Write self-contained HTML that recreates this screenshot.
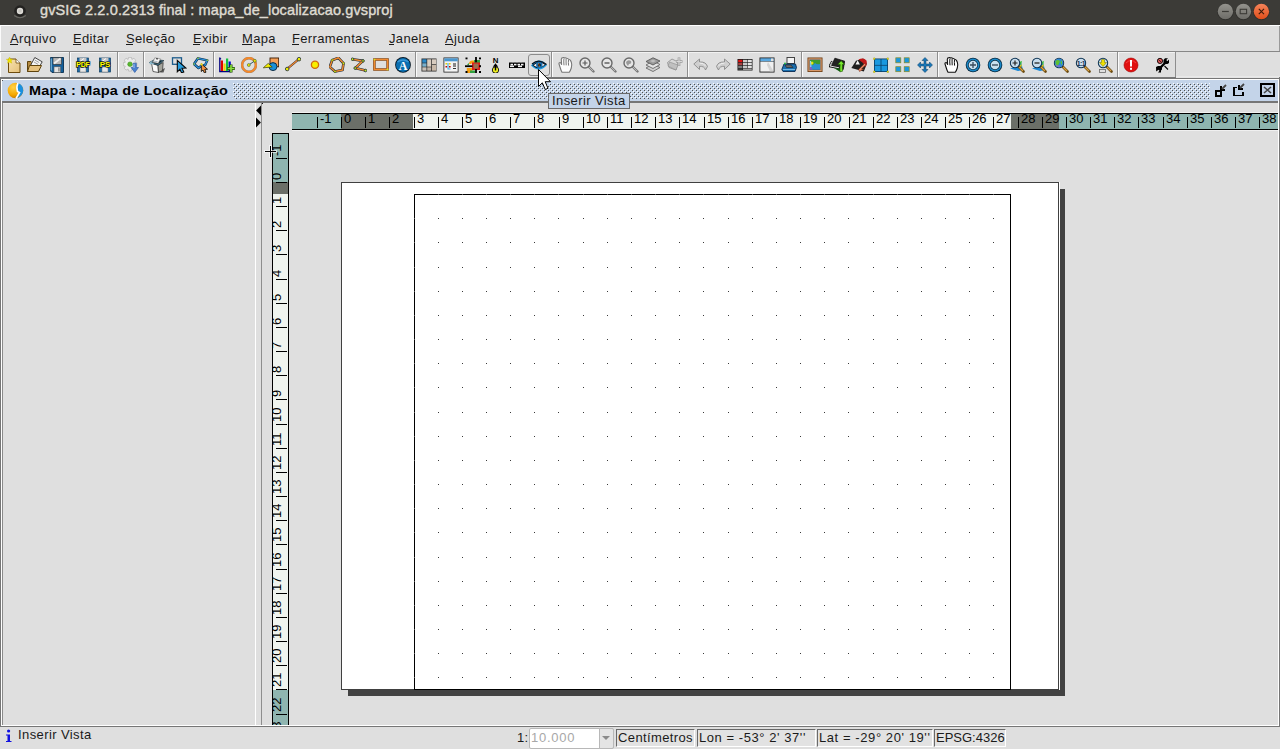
<!DOCTYPE html>
<html><head><meta charset="utf-8"><title>gvSIG</title>
<style>
html,body{margin:0;padding:0;width:1280px;height:749px;overflow:hidden;background:#dfdfdf;position:relative}
</style></head><body>
<div style="position:absolute;left:0px;top:0px;width:1280px;height:25px;background:#3c3b37;"></div><div style="position:absolute;left:0px;top:25px;width:1280px;height:1px;background:#ffffff;"></div><svg style="position:absolute;left:12px;top:3px" width="16" height="16"><path d="M2.2 12.5 Q8 17 13.8 12.5" stroke="#6a6964" stroke-width="1.2" fill="none"/><circle cx="8" cy="8" r="5.8" fill="#232220"/><circle cx="8" cy="8" r="3.2" fill="#dddbd6"/><circle cx="8" cy="8" r="1.8" fill="#c8c6c0"/></svg><div style="position:absolute;left:40px;top:3px;font-family:'Liberation Sans', sans-serif;font-size:14.5px;font-weight:400;color:#dfdbd2;white-space:pre;line-height:1;letter-spacing:0.12px;-webkit-text-stroke:0.4px #dfdbd2">gvSIG 2.2.0.2313 final : mapa_de_localizacao.gvsproj</div><svg style="position:absolute;left:1215px;top:1px" width="21" height="21"><circle cx="10.4" cy="11" r="8.2" fill="#2e2d2a"/><defs><linearGradient id="g1225" x1="0" y1="0" x2="0" y2="1"><stop offset="0" stop-color="#94938d"/><stop offset="1" stop-color="#6e6d68"/></linearGradient></defs><g transform="translate(0.4,0.5)"><circle cx="10" cy="10" r="7.7" fill="url(#g1225)"/><rect x="6.6" y="9.4" width="6.8" height="1.2" fill="#3c3b37"/></g></svg><svg style="position:absolute;left:1233px;top:1px" width="21" height="21"><circle cx="10.4" cy="11" r="8.2" fill="#2e2d2a"/><defs><linearGradient id="g1243" x1="0" y1="0" x2="0" y2="1"><stop offset="0" stop-color="#94938d"/><stop offset="1" stop-color="#6e6d68"/></linearGradient></defs><g transform="translate(0.4,0.5)"><circle cx="10" cy="10" r="7.7" fill="url(#g1243)"/><rect x="6.8" y="7.8" width="6.4" height="4.4" fill="none" stroke="#3c3b37" stroke-width="1.1"/></g></svg><svg style="position:absolute;left:1251px;top:1px" width="21" height="21"><circle cx="10.4" cy="11" r="8.2" fill="#2e2d2a"/><defs><linearGradient id="g1261" x1="0" y1="0" x2="0" y2="1"><stop offset="0" stop-color="#f5845a"/><stop offset="1" stop-color="#e04e1a"/></linearGradient></defs><g transform="translate(0.4,0.5)"><circle cx="10" cy="10" r="7.7" fill="url(#g1261)"/><path d="M7.4 7.4 L12.6 12.6 M12.6 7.4 L7.4 12.6" stroke="#3a1a0a" stroke-width="1.1"/></g></svg><div style="position:absolute;left:0px;top:26px;width:1280px;height:25px;background:#dfdfdf;"></div><div style="position:absolute;left:0px;top:26px;width:1px;height:25px;background:#fbfbfb;"></div><div style="position:absolute;left:0px;top:51px;width:1280px;height:1px;background:#878787;"></div><div style="position:absolute;left:10px;top:32px;font-family:'Liberation Sans', sans-serif;font-size:13px;font-weight:400;color:#1a1a1a;white-space:pre;line-height:1;letter-spacing:0.35px">Arquivo</div><div style="position:absolute;left:73px;top:32px;font-family:'Liberation Sans', sans-serif;font-size:13px;font-weight:400;color:#1a1a1a;white-space:pre;line-height:1;letter-spacing:0.35px">Editar</div><div style="position:absolute;left:126px;top:32px;font-family:'Liberation Sans', sans-serif;font-size:13px;font-weight:400;color:#1a1a1a;white-space:pre;line-height:1;letter-spacing:0.35px">Seleção</div><div style="position:absolute;left:193px;top:32px;font-family:'Liberation Sans', sans-serif;font-size:13px;font-weight:400;color:#1a1a1a;white-space:pre;line-height:1;letter-spacing:0.35px">Exibir</div><div style="position:absolute;left:242px;top:32px;font-family:'Liberation Sans', sans-serif;font-size:13px;font-weight:400;color:#1a1a1a;white-space:pre;line-height:1;letter-spacing:0.35px">Mapa</div><div style="position:absolute;left:292px;top:32px;font-family:'Liberation Sans', sans-serif;font-size:13px;font-weight:400;color:#1a1a1a;white-space:pre;line-height:1;letter-spacing:0.35px">Ferramentas</div><div style="position:absolute;left:389px;top:32px;font-family:'Liberation Sans', sans-serif;font-size:13px;font-weight:400;color:#1a1a1a;white-space:pre;line-height:1;letter-spacing:0.35px">Janela</div><div style="position:absolute;left:445px;top:32px;font-family:'Liberation Sans', sans-serif;font-size:13px;font-weight:400;color:#1a1a1a;white-space:pre;line-height:1;letter-spacing:0.35px">Ajuda</div><div style="position:absolute;left:10px;top:44px;width:8px;height:1px;background:#1a1a1a;"></div><div style="position:absolute;left:73px;top:44px;width:8px;height:1px;background:#1a1a1a;"></div><div style="position:absolute;left:126px;top:44px;width:7px;height:1px;background:#1a1a1a;"></div><div style="position:absolute;left:193px;top:44px;width:7px;height:1px;background:#1a1a1a;"></div><div style="position:absolute;left:242px;top:44px;width:10px;height:1px;background:#1a1a1a;"></div><div style="position:absolute;left:292px;top:44px;width:7px;height:1px;background:#1a1a1a;"></div><div style="position:absolute;left:389px;top:44px;width:5px;height:1px;background:#1a1a1a;"></div><div style="position:absolute;left:445px;top:44px;width:8px;height:1px;background:#1a1a1a;"></div><div style="position:absolute;left:0px;top:52px;width:1280px;height:25px;background:#dfdfdf;"></div><div style="position:absolute;left:0px;top:52px;width:1176px;height:1px;background:#f2f2f2;"></div><div style="position:absolute;left:528px;top:54px;width:20px;height:20px;border:1px solid #8c8c8c;border-radius:3px"></div><svg style="position:absolute;left:5px;top:57px" width="16" height="16" viewBox="0 0 16 16"><defs><linearGradient id="gnew" x1="0" y1="0" x2="1" y2="1"><stop offset="0" stop-color="#f8e2b0"/><stop offset="1" stop-color="#e4c07a"/></linearGradient></defs>
<path d="M3.5 2 H11 L15 6 V15.5 H3.5 Z" fill="url(#gnew)" stroke="#6e4c0e" stroke-width="1"/>
<path d="M11 2 V6 H15" fill="#fff" stroke="#6e4c0e" stroke-width="0.8"/>
<path d="M4.6 0 L5.5 2.2 L7.9 2.3 L6.1 3.8 L6.8 6.2 L4.6 4.9 L2.5 6.2 L3.1 3.8 L1.3 2.3 L3.7 2.2Z" fill="#f0e400" stroke="#c8b800" stroke-width="0.4"/></svg><svg style="position:absolute;left:27px;top:57px" width="16" height="16" viewBox="0 0 16 16"><path d="M0.5 4.5 H4 L5 5.5 H11 V14.5 H0.5Z" fill="#b58a40" stroke="#5f430c"/>
<path d="M7.8 0.5 L15.2 4.8 L11 12 L3.8 7.8Z" fill="#f4f4f4" stroke="#333" stroke-width="0.9"/>
<path d="M8 3.2 L12.2 5.6 M7 5 L11.2 7.4" stroke="#999" stroke-width="0.9"/>
<path d="M2.5 8.5 H14.5 L11.5 14.5 H0.5Z" fill="#e6c27e" stroke="#5f430c"/></svg><svg style="position:absolute;left:49px;top:57px" width="16" height="16" viewBox="0 0 16 16"><path d="M1.5 0.5 H14.5 V15.5 H3 L1.5 14Z" fill="#145f9a" stroke="#0a3050" stroke-width="0.9"/>
<path d="M2.2 1.5 V13.5" stroke="#78b8e0" stroke-width="1.2"/>
<rect x="4" y="0.8" width="8.5" height="6.5" fill="#b8b8b8" stroke="#333" stroke-width="0.6"/>
<path d="M5 6.5 L11.5 1.5" stroke="#f0f0f0" stroke-width="1.6"/>
<rect x="5" y="9.8" width="6.5" height="5.7" fill="#e4e4e4" stroke="#555" stroke-width="0.6"/>
<rect x="9" y="10.5" width="1.8" height="4" fill="#999"/></svg><svg style="position:absolute;left:75px;top:57px" width="16" height="16" viewBox="0 0 16 16"><rect x="2.5" y="1" width="11" height="14" fill="#1a6aa8" stroke="#0b3a60" stroke-width="0.7"/>
<rect x="4.5" y="1" width="7" height="4.5" fill="#c4c4c4"/>
<path d="M5 4.5 L9 1.5" stroke="#fff" stroke-width="1"/>
<rect x="5" y="10" width="6" height="5" fill="#e8e8e8" stroke="#777" stroke-width="0.5"/><text x="8" y="10.2" font-family="Liberation Sans" font-weight="700" font-size="7" fill="#ffff00" text-anchor="middle" stroke="#111" stroke-width="1.4" paint-order="stroke" letter-spacing="-0.2">PDF</text></svg><svg style="position:absolute;left:97px;top:57px" width="16" height="16" viewBox="0 0 16 16"><rect x="2.5" y="1" width="11" height="14" fill="#1a6aa8" stroke="#0b3a60" stroke-width="0.7"/>
<rect x="4.5" y="1" width="7" height="4.5" fill="#c4c4c4"/>
<path d="M5 4.5 L9 1.5" stroke="#fff" stroke-width="1"/>
<rect x="5" y="10" width="6" height="5" fill="#e8e8e8" stroke="#777" stroke-width="0.5"/><text x="8" y="10.4" font-family="Liberation Sans" font-weight="700" font-size="8" fill="#ffff00" text-anchor="middle" stroke="#111" stroke-width="1.4" paint-order="stroke">PS</text></svg><svg style="position:absolute;left:123px;top:57px" width="16" height="16" viewBox="0 0 16 16"><g fill="#ececec" stroke="#b8b8b8" stroke-width="0.8">
<path d="M5.6 0.3 H8.4 L8.9 2.4 L10.9 1.3 L12.8 3.2 L11.7 5.2 L13.8 5.8 V8.6 L11.7 9.2 L12.8 11.2 L10.9 13.1 L8.9 12 L8.4 14.1 H5.6 L5.1 12 L3.1 13.1 L1.2 11.2 L2.3 9.2 L0.2 8.6 V5.8 L2.3 5.2 L1.2 3.2 L3.1 1.3 L5.1 2.4Z"/></g>
<circle cx="7" cy="7.2" r="2.3" fill="#58b830" stroke="#3a8a1a" stroke-width="0.5"/>
<path d="M10.2 6.2 H13.3 V10.5 H15.5 L11.75 15.5 L8 10.5 H10.2Z" fill="#4a80d0" stroke="#2a58a0" stroke-width="0.6"/>
<path d="M11 7 V11" stroke="#a8c8f0" stroke-width="0.9"/></svg><svg style="position:absolute;left:149px;top:57px" width="16" height="16" viewBox="0 0 16 16"><path d="M13 12.5 L16 11 L14.5 15.5 L11 15.5Z" fill="#3a3a3a" opacity="0.8"/>
<path d="M2.5 6 L9 8.2 L9.5 15.5 L4 14.5Z" fill="#fbfbfb" stroke="#2a2a2a" stroke-width="0.7"/>
<path d="M9 8.2 L14.2 5.5 L13.5 13.5 L9.5 15.5Z" fill="#a4a49c" stroke="#2a2a2a" stroke-width="0.7"/>
<path d="M0.3 5.5 L6 2.3 L15 3.6 L9 8.5Z" fill="#3a6a80" stroke="#1a2a30" stroke-width="0.6"/>
<path d="M0.3 5.5 L3.5 3.8 L5 6.8 L1 7.5Z" fill="#8ab8cc"/>
<path d="M2.3 5.3 L6.3 3.2 L13 4.2 L8.6 7Z" fill="#1a2a30"/>
<path d="M3.8 5.2 L5.8 0.8 L11.5 1.8 L9.3 6.3Z" fill="#f6f6f6" stroke="#666" stroke-width="0.5"/>
<path d="M7 1 L9 1.5 L8 3Z" fill="#111"/>
<path d="M5 4.2 L8.5 4.6" stroke="#9ab" stroke-width="0.8"/></svg><svg style="position:absolute;left:171px;top:57px" width="16" height="16" viewBox="0 0 16 16"><rect x="1.5" y="0.8" width="9" height="6.5" fill="none" stroke="#1b5b8b" stroke-width="1.3"/>
<path d="M6.3 3.3 L14.8 11 L11 11.3 L12.8 15 L10.6 15.9 L8.9 12.3 L6.3 14.8Z" fill="#2aa0e0" stroke="#0a0a0a" stroke-width="1.1"/></svg><svg style="position:absolute;left:193px;top:57px" width="16" height="16" viewBox="0 0 16 16"><path d="M1 7 L5 1.3 L14.3 3.3 L12.2 8 L8.5 8.6 L5.5 11Z" fill="none" stroke="#0a2a4a" stroke-width="2.4" stroke-linejoin="round"/>
<path d="M1 7 L5 1.3 L14.3 3.3 L12.2 8 L8.5 8.6 L5.5 11Z" fill="none" stroke="#2a90d8" stroke-width="1.3" stroke-linejoin="round"/>
<g fill="#a0d020"><circle cx="5" cy="1.3" r="0.8"/><circle cx="14.3" cy="3.3" r="0.8"/><circle cx="1" cy="7" r="0.8"/></g>
<path d="M8.3 6.8 L14.5 12.2 L11.8 12.4 L13 15.2 L11.3 15.8 L10 13 L8.3 14.5Z" fill="#f09040" stroke="#111" stroke-width="0.9"/>
<circle cx="8.6" cy="7.4" r="1.2" fill="#f0e020"/></svg><svg style="position:absolute;left:219px;top:57px" width="16" height="16" viewBox="0 0 16 16"><path d="M0.8 0.5 V14.5 H12" fill="none" stroke="#000080" stroke-width="1.3"/>
<path d="M0.8 0.5 L2.5 2 L0.8 2.5Z" fill="#000080"/>
<rect x="1.8" y="3.5" width="2.2" height="10.5" fill="#e00000"/>
<rect x="4.4" y="6.5" width="2.2" height="7.5" fill="#f5d000"/>
<rect x="7" y="1.5" width="2.2" height="12.5" fill="#10c040"/>
<rect x="9.6" y="4.5" width="2.2" height="9.5" fill="#0000d0"/>
<path d="M12 7.5 V15.5 M8.3 11.5 H15.8" stroke="#1a4a00" stroke-width="3"/>
<path d="M12 8 V15 M8.8 11.5 H15.3" stroke="#8ce040" stroke-width="1.6"/></svg><svg style="position:absolute;left:241px;top:57px" width="16" height="16" viewBox="0 0 16 16"><circle cx="8" cy="8" r="6.9" fill="none" stroke="#5a2a00" stroke-width="2.6" opacity="0.5"/>
<circle cx="8" cy="8" r="6.9" fill="none" stroke="#f5892a" stroke-width="2"/>
<path d="M7.8 8 L13.8 3.8" stroke="#1a4a5a" stroke-width="0.9"/>
<circle cx="7.8" cy="8" r="1.5" fill="#e6e600" stroke="#2a4a2a" stroke-width="0.5"/>
<circle cx="13.8" cy="3.8" r="1.5" fill="#e6e600" stroke="#2a4a2a" stroke-width="0.5"/></svg><svg style="position:absolute;left:263px;top:57px" width="16" height="16" viewBox="0 0 16 16"><rect x="7" y="1" width="8.7" height="8.8" fill="#f5a05a" stroke="#3a1a00" stroke-width="0.9"/>
<circle cx="10" cy="9.6" r="4" fill="#1a90d8" stroke="#06223a" stroke-width="0.9"/>
<path d="M9.2 10 L0.3 10.8 L5.2 6.4Z" fill="#f5f000" stroke="#3a3a00" stroke-width="0.7"/></svg><svg style="position:absolute;left:285px;top:57px" width="16" height="16" viewBox="0 0 16 16"><path d="M2 12 L14 2" stroke="#1a1a2a" stroke-width="2.2"/>
<path d="M2 12 L14 2" stroke="#f08a30" stroke-width="1.4"/>
<circle cx="2.2" cy="12" r="1.8" fill="#f0f000" stroke="#1a2a3a" stroke-width="0.8"/>
<circle cx="14" cy="2.2" r="1.8" fill="#f0f000" stroke="#1a2a3a" stroke-width="0.8"/></svg><svg style="position:absolute;left:307px;top:57px" width="16" height="16" viewBox="0 0 16 16"><circle cx="8" cy="7.8" r="3.6" fill="#f8f000" stroke="#d06a10" stroke-width="1.3"/></svg><svg style="position:absolute;left:329px;top:57px" width="16" height="16" viewBox="0 0 16 16"><path d="M3.2 3.2 L9.4 0.8 L14.5 6.3 L13.5 13 L6 14.5 L0.8 10Z" fill="none" stroke="#1a2a3a" stroke-width="2.6" stroke-linejoin="round"/>
<path d="M3.2 3.2 L9.4 0.8 L14.5 6.3 L13.5 13 L6 14.5 L0.8 10Z" fill="none" stroke="#f08a30" stroke-width="1.5" stroke-linejoin="round"/>
<g fill="#d0f020" stroke="#2a3a1a" stroke-width="0.4"><circle cx="3.2" cy="3.2" r="1.1"/><circle cx="14.5" cy="6.3" r="1.1"/><circle cx="6" cy="14.5" r="1.1"/></g></svg><svg style="position:absolute;left:351px;top:57px" width="16" height="16" viewBox="0 0 16 16"><path d="M1.5 2.2 L12 3.9 L4.2 11.1 L14.5 13.5" fill="none" stroke="#1a2a3a" stroke-width="2.6" stroke-linejoin="round"/>
<path d="M1.5 2.2 L12 3.9 L4.2 11.1 L14.5 13.5" fill="none" stroke="#f08a30" stroke-width="1.5" stroke-linejoin="round"/>
<g fill="#c8f020" stroke="#1a2a3a" stroke-width="0.8"><circle cx="1.5" cy="2.2" r="1.3"/><circle cx="12" cy="3.9" r="1.3"/><circle cx="4.2" cy="11.1" r="1.3"/><circle cx="14.5" cy="13.5" r="1.3"/></g></svg><svg style="position:absolute;left:373px;top:57px" width="16" height="16" viewBox="0 0 16 16"><rect x="1.4" y="2.5" width="13.2" height="10" fill="none" stroke="#5a3010" stroke-width="2.4"/>
<rect x="1.4" y="2.5" width="13.2" height="10" fill="none" stroke="#f08a30" stroke-width="1.6"/>
<circle cx="1.5" cy="2.6" r="0.9" fill="#c8f020"/><circle cx="14.5" cy="12.4" r="0.9" fill="#c8f020"/></svg><svg style="position:absolute;left:395px;top:57px" width="16" height="16" viewBox="0 0 16 16"><circle cx="8" cy="7.9" r="7.9" fill="#081a28"/>
<circle cx="8" cy="7.9" r="7" fill="#0a6eb0"/>
<path d="M2.5 5 Q8 1 13.5 5" stroke="#3a98d8" stroke-width="1.5" fill="none"/>
<text x="8" y="12.6" font-family="Liberation Serif" font-weight="700" font-size="12" fill="#fff" text-anchor="middle">A</text></svg><svg style="position:absolute;left:421px;top:57px" width="16" height="16" viewBox="0 0 16 16"><rect x="0.5" y="1.5" width="15" height="13" fill="#2a2a2a"/>
<rect x="1.3" y="2.3" width="4.2" height="3.4" fill="#2a88c8"/><rect x="1.3" y="6.3" width="4.2" height="3.4" fill="#7ab0cc"/><rect x="1.3" y="10.3" width="4.2" height="3.4" fill="#c8c0b8"/>
<rect x="6.2" y="2.3" width="4" height="7.4" fill="#d8ccc0"/><rect x="6.2" y="10.3" width="4" height="3.4" fill="#c0b4a8"/>
<rect x="10.9" y="2.3" width="4.3" height="5" fill="#d8ccc0"/><rect x="10.9" y="8" width="4.3" height="5.7" fill="#c8b8a8"/></svg><svg style="position:absolute;left:443px;top:57px" width="16" height="16" viewBox="0 0 16 16"><rect x="0.5" y="0.5" width="15" height="15" fill="#222"/>
<rect x="1.3" y="1.3" width="13.4" height="13.4" fill="#f4f4f4"/>
<rect x="1.3" y="1.3" width="13.4" height="3" fill="#4a98d0"/>
<rect x="2.5" y="6" width="1.6" height="1.5" fill="#e8d000"/><rect x="6" y="6" width="1.6" height="1.5" fill="#e8d000"/>
<rect x="2.5" y="9" width="1.6" height="1.5" fill="#c00000"/><rect x="6" y="9" width="1.6" height="1.5" fill="#c00000"/>
<path d="M5 6 V12 H7.5" stroke="#40a8e0" stroke-width="1.1" fill="none"/>
<rect x="10" y="6" width="3" height="4" fill="#888"/><rect x="10" y="11" width="3" height="1" fill="#333"/></svg><svg style="position:absolute;left:465px;top:57px" width="16" height="16" viewBox="0 0 16 16"><path d="M4 7 Q4 3.5 7.5 3.5 H10 V6 H7 Q6.5 6 6.5 7Z" fill="#f5a010"/>
<rect x="1.8" y="11" width="5.5" height="5" fill="#f5a010"/>
<rect x="9" y="3" width="6" height="4" fill="#30a040"/>
<path d="M2 7.5 L4 6 V8.5Z" fill="#30a040"/>
<rect x="5" y="13.5" width="5" height="2.5" fill="#30a040"/>
<rect x="7" y="5.5" width="8" height="7.5" fill="#e01818"/>
<rect x="8.6" y="6.6" width="4.8" height="5" fill="#9a7050"/>
<path d="M0 9.2 H7.5" stroke="#000" stroke-width="1.8"/>
<path d="M11 0 V5.3 M11 12 V16" stroke="#000" stroke-width="1.8"/>
<g fill="#000"><rect x="0.5" y="0.5" width="2" height="1.8"/><rect x="14" y="0.5" width="2" height="1.8"/><rect x="0.5" y="14" width="2" height="2"/><rect x="14" y="14" width="2" height="2"/><rect x="14.2" y="8.2" width="1.8" height="2"/></g></svg><svg style="position:absolute;left:487px;top:57px" width="16" height="16" viewBox="0 0 16 16"><text x="8.5" y="5.8" font-family="Liberation Sans" font-weight="700" font-size="7.8" fill="#000" text-anchor="middle">N</text>
<circle cx="8.5" cy="13" r="3.2" fill="#f0f020" stroke="#1a1a1a" stroke-width="1"/>
<path d="M8.5 13.5 V8.5" stroke="#000" stroke-width="1.4"/>
<path d="M5.8 9.8 L8.5 6.3 L11.2 9.8Z" fill="#000"/></svg><svg style="position:absolute;left:509px;top:57px" width="16" height="16" viewBox="0 0 16 16"><rect x="0" y="5.5" width="16" height="5.5" fill="#000"/>
<g fill="#f4f4f4"><rect x="1.5" y="6.8" width="2.5" height="1.6"/><rect x="5" y="6.8" width="2.5" height="1.6"/><rect x="8.5" y="6.8" width="2.5" height="1.6"/><rect x="12" y="6.8" width="2.5" height="1.6"/>
<rect x="1" y="8.6" width="4" height="1.5"/><rect x="9" y="8.6" width="4" height="1.5"/></g>
<g fill="#999"><rect x="3.5" y="5" width="1" height="1"/><rect x="7.5" y="5" width="1" height="1"/><rect x="11.5" y="5" width="1" height="1"/></g></svg><svg style="position:absolute;left:531px;top:57px" width="16" height="16" viewBox="0 0 16 16"><path d="M0 8.5 Q8 -1 16 8 Q8 17 0 8.5Z" fill="#1a98e0"/>
<path d="M1.2 8.2 Q8 1.5 15 7.6 Q8 14.5 1.2 8.2Z" fill="#0a1420"/>
<path d="M2.6 8.3 Q8 3.3 13.8 7.8 Q8 12.6 2.6 8.3Z" fill="#f8f8f8"/>
<circle cx="8.3" cy="7.9" r="3.2" fill="#1a6fb0"/>
<circle cx="8.3" cy="7.9" r="1.5" fill="#0a0a0a"/>
<path d="M7.5 6 L8.5 10" stroke="#c07a3a" stroke-width="0.8"/>
<path d="M1 7 Q8 1 15.5 7.5" stroke="#0a1420" stroke-width="1.2" fill="none"/></svg><svg style="position:absolute;left:557px;top:57px" width="16" height="16" viewBox="0 0 16 16"><path d="M5 15.3 Q3.8 13 3.3 11 L2 7 Q1.8 5.6 3.2 5.5 Q4 5.6 4.6 7.5 L4.3 2.3 Q4.5 0.6 6 0.6 Q7 0.4 7.6 1 Q8.5 0.5 9.6 1.2 Q11 1.3 11.6 2.3 Q12.8 2.3 13.6 3.6 Q14.8 5.5 14.7 8 L14.3 11 Q13.5 13.5 12.3 15.2 Z" fill="#fdfdfd" stroke="#777" stroke-width="1.1" stroke-linejoin="round"/>
<path d="M6.9 1.6 Q6.6 5 7 8.3 M9.1 1.6 Q9 5 9.2 8.3 M11.5 2.6 Q11.2 5.5 11.6 8.6" stroke="#777" stroke-width="1" fill="none"/></svg><svg style="position:absolute;left:579px;top:57px" width="16" height="16" viewBox="0 0 16 16"><path d="M9.5 9.5 L14.5 14.5" stroke="#7a7a7a" stroke-width="2.4" stroke-linecap="round"/>
<path d="M10 10 L14 14" stroke="#c8c8c8" stroke-width="0.8"/>
<circle cx="6" cy="6" r="5" fill="#e6e6e6" stroke="#6a6a6a" stroke-width="1.4"/><path d="M6 3.5 V8.5 M3.5 6 H8.5" stroke="#5a5a5a" stroke-width="1.2"/></svg><svg style="position:absolute;left:601px;top:57px" width="16" height="16" viewBox="0 0 16 16"><path d="M9.5 9.5 L14.5 14.5" stroke="#7a7a7a" stroke-width="2.4" stroke-linecap="round"/>
<path d="M10 10 L14 14" stroke="#c8c8c8" stroke-width="0.8"/>
<circle cx="6" cy="6" r="5" fill="#e6e6e6" stroke="#6a6a6a" stroke-width="1.4"/><path d="M3.5 6 H8.5" stroke="#5a5a5a" stroke-width="1.4"/></svg><svg style="position:absolute;left:623px;top:57px" width="16" height="16" viewBox="0 0 16 16"><path d="M9.5 9.5 L14.5 14.5" stroke="#7a7a7a" stroke-width="2.4" stroke-linecap="round"/>
<path d="M10 10 L14 14" stroke="#c8c8c8" stroke-width="0.8"/>
<circle cx="6" cy="6" r="5" fill="#e6e6e6" stroke="#6a6a6a" stroke-width="1.4"/><path d="M3 5 Q5 2 8 4 Q9 7 6 7 L5 9 Q3 7 3 5Z" fill="#9a9a9a"/></svg><svg style="position:absolute;left:645px;top:57px" width="16" height="16" viewBox="0 0 16 16"><path d="M1 11 L8 14.5 L15 10.5 L8 7Z" fill="#d0d0d0" stroke="#6a6a6a" stroke-width="0.9"/>
<path d="M1 8 L8 11.5 L15 7.5 L8 4Z" fill="#e4e4e4" stroke="#6a6a6a" stroke-width="0.9"/>
<path d="M1 4.5 L8 8 L15 4 L8 0.8Z" fill="#9a9a9a" stroke="#5a5a5a" stroke-width="0.9"/>
<path d="M5 4 L8 2.5 L11 4 L8 5.5Z" fill="#bdbdbd"/></svg><svg style="position:absolute;left:667px;top:57px" width="16" height="16" viewBox="0 0 16 16"><path d="M0.5 5.5 L5 2 L11 5 L9 13 L2 10.5Z" fill="#d8d8d8" stroke="#8a8a8a" stroke-width="0.8"/>
<path d="M1 9 L9 13 L11 8 L2.5 5Z" fill="#c0c0c0" stroke="#8a8a8a" stroke-width="0.6"/>
<path d="M12 0.5 V9 M9 4.5 H15.5" stroke="#9a9a9a" stroke-width="2.6"/>
<path d="M12 1 V8.5 M9.5 4.5 H15" stroke="#d8d8d8" stroke-width="1.2"/></svg><svg style="position:absolute;left:693px;top:57px" width="16" height="16" viewBox="0 0 16 16"><path d="M0.8 7 L6.5 2 V5 Q13 4.5 14.5 9.5 L12.5 13 Q11.5 9 6.5 9.3 V12.5Z" fill="#cfcfcf" stroke="#8a8a8a" stroke-width="0.9"/>
<path d="M6.5 6 Q11 6 12.5 9" stroke="#f0f0f0" stroke-width="1" fill="none"/></svg><svg style="position:absolute;left:715px;top:57px" width="16" height="16" viewBox="0 0 16 16"><path d="M15.2 7 L9.5 2 V5 Q3 4.5 1.5 9.5 L3.5 13 Q4.5 9 9.5 9.3 V12.5Z" fill="#cfcfcf" stroke="#8a8a8a" stroke-width="0.9"/>
<path d="M9.5 6 Q5 6 3.5 9" stroke="#f0f0f0" stroke-width="1" fill="none"/></svg><svg style="position:absolute;left:737px;top:57px" width="16" height="16" viewBox="0 0 16 16"><rect x="0.5" y="2" width="15" height="11.5" fill="#1a1a1a"/>
<rect x="1.2" y="2.8" width="4.2" height="2.4" fill="#e01010"/><rect x="1.2" y="5.8" width="4.2" height="2.4" fill="#a84040"/><rect x="1.2" y="8.8" width="4.2" height="2.4" fill="#7a7a7a"/><rect x="1.2" y="11.6" width="4.2" height="1.4" fill="#3a3a3a"/>
<g fill="#c8c8c8"><rect x="6" y="2.8" width="4" height="2.4"/><rect x="6" y="5.8" width="4" height="2.4"/><rect x="6" y="8.8" width="4" height="2.4"/></g>
<g fill="#e4e4e4"><rect x="10.6" y="2.8" width="4.2" height="2.4"/><rect x="10.6" y="5.8" width="4.2" height="2.4"/><rect x="10.6" y="8.8" width="4.2" height="2.4"/></g>
<rect x="6" y="11.6" width="8.8" height="1.4" fill="#9a9a9a"/></svg><svg style="position:absolute;left:759px;top:57px" width="16" height="16" viewBox="0 0 16 16"><rect x="0.5" y="0.5" width="15" height="15" fill="#1a1a1a"/>
<rect x="1.3" y="1.3" width="13.4" height="3" fill="#5aa8e0"/>
<rect x="1.3" y="4.6" width="13.4" height="10" fill="#f0f0f0"/>
<path d="M9 5 L14.7 14.6 H11 L8 8Z" fill="#c8c8c8" opacity="0.7"/>
<rect x="12" y="1.5" width="2.5" height="2.5" fill="#e0e0e0"/></svg><svg style="position:absolute;left:781px;top:57px" width="16" height="16" viewBox="0 0 16 16"><rect x="6" y="0.5" width="7.5" height="6" fill="#f4f4f4" stroke="#333" stroke-width="0.9"/>
<path d="M0.8 12.5 L3 7 H14.5 L15.5 10.5 L14 14.5 H2Z" fill="#1a6fae" stroke="#0a2a50" stroke-width="0.9"/>
<path d="M4 8 L10 8 L12 10.5 L5.5 10.5Z" fill="#6a6a6a" stroke="#222" stroke-width="0.6"/>
<path d="M2 12.5 H14" stroke="#8ccaf0" stroke-width="0.8"/>
<circle cx="4" cy="6.5" r="0.9" fill="#20c040"/></svg><svg style="position:absolute;left:807px;top:57px" width="16" height="16" viewBox="0 0 16 16"><rect x="0.5" y="0.5" width="15" height="14.5" fill="#6a3a10"/>
<rect x="1.3" y="1.3" width="13.4" height="12.9" fill="#d89868"/>
<rect x="2.5" y="2.5" width="11" height="10.5" fill="#4a6a78"/>
<rect x="3" y="3" width="10" height="9.5" fill="#2a90d0"/>
<path d="M3 3 H13 V7 Q10 8 8 6 Q6 9 4 8Z" fill="#3a9a30"/>
<path d="M3 8 Q4 11 6 12.5 H3Z" fill="#9a50c0"/>
<circle cx="5" cy="6" r="1.5" fill="#e8e000"/>
<path d="M3.5 4 Q4.2 7 3.8 10" stroke="#a8e0ff" stroke-width="1" fill="none"/></svg><svg style="position:absolute;left:829px;top:57px" width="16" height="16" viewBox="0 0 16 16"><path d="M5.9 1.2 L15.7 4.2 L14.2 12.5 L2.3 9.4Z" fill="#222" stroke="#000" stroke-width="0.7"/>
<path d="M3.1 4.2 L0.3 9.4 L10 11.2" fill="none" stroke="#111" stroke-width="1.8"/>
<path d="M3.1 4.6 L1 9 L10 10.8" fill="none" stroke="#f4f4f4" stroke-width="0.9"/>
<path d="M4.9 11 L11 14.8 L13 12Z" fill="#0a5a0a"/>
<path d="M11 14.8 Q10.8 10 11.2 7.5 H8.8 L12.2 3.8 L15.4 7.5 H13.4 Q13.2 11 13.6 14.2Z" fill="#7ae830" stroke="#1a5a00" stroke-width="0.6"/></svg><svg style="position:absolute;left:851px;top:57px" width="16" height="16" viewBox="0 0 16 16"><path d="M0.4 10.9 L5 3.7 L12.3 1.6 L15.9 6.8 L12.8 14.5Z" fill="#1e1e1e"/>
<path d="M7.5 2.5 Q12.5 0 15.5 3.5 Q16.5 7 14.5 10 L12 6Z" fill="#c01818"/>
<path d="M4.5 7.5 L6.6 3.2 L8.9 7.5Z" fill="#f4f4f4"/>
<path d="M7.6 12.5 L13.5 6.5 L14.8 7.8 L10.5 12 H12.8 L8.5 14.5Z" fill="#f08868" stroke="#6a2a10" stroke-width="0.5"/></svg><svg style="position:absolute;left:873px;top:57px" width="16" height="16" viewBox="0 0 16 16"><rect x="1" y="1.5" width="14" height="13.5" fill="#0a3a60"/>
<rect x="1.8" y="2.3" width="5.8" height="5.6" fill="#1a98e0"/><rect x="8.4" y="2.3" width="5.8" height="5.6" fill="#1a98e0"/>
<rect x="1.8" y="8.6" width="5.8" height="5.6" fill="#1a98e0"/><rect x="8.4" y="8.6" width="5.8" height="5.6" fill="#1a98e0"/>
<g fill="#f0e820" stroke="#6a6a00" stroke-width="0.3"><circle cx="1.2" cy="1.7" r="1"/><circle cx="14.8" cy="1.7" r="1"/><circle cx="1.2" cy="14.8" r="1"/><circle cx="14.8" cy="14.8" r="1"/></g></svg><svg style="position:absolute;left:895px;top:57px" width="16" height="16" viewBox="0 0 16 16"><g fill="#1a98e0" stroke="#8a8a20" stroke-width="0.7"><rect x="0.8" y="0.8" width="5" height="5"/><rect x="9.2" y="0.8" width="5" height="5"/><rect x="0.8" y="9.7" width="5" height="5"/><rect x="9.2" y="9.7" width="5" height="5"/></g></svg><svg style="position:absolute;left:917px;top:57px" width="16" height="16" viewBox="0 0 16 16"><path d="M8 0.5 L11 3.5 H9 V7 H12.5 V5 L15.5 8 L12.5 11 V9 H9 V12.5 H11 L8 15.5 L5 12.5 H7 V9 H3.5 V11 L0.5 8 L3.5 5 V7 H7 V3.5 H5Z" fill="#1a78b8" stroke="#0a3a60" stroke-width="0.5"/></svg><svg style="position:absolute;left:943px;top:57px" width="16" height="16" viewBox="0 0 16 16"><path d="M5 15.3 Q3.8 13 3.3 11 L2 7 Q1.8 5.6 3.2 5.5 Q4 5.6 4.6 7.5 L4.3 2.3 Q4.5 0.6 6 0.6 Q7 0.4 7.6 1 Q8.5 0.5 9.6 1.2 Q11 1.3 11.6 2.3 Q12.8 2.3 13.6 3.6 Q14.8 5.5 14.7 8 L14.3 11 Q13.5 13.5 12.3 15.2 Z" fill="#fdfdfd" stroke="#111" stroke-width="1.1" stroke-linejoin="round"/>
<path d="M6.9 1.6 Q6.6 5 7 8.3 M9.1 1.6 Q9 5 9.2 8.3 M11.5 2.6 Q11.2 5.5 11.6 8.6" stroke="#111" stroke-width="1" fill="none"/></svg><svg style="position:absolute;left:965px;top:57px" width="16" height="16" viewBox="0 0 16 16"><circle cx="8" cy="8" r="7.3" fill="#0a2a40"/>
<circle cx="8" cy="8" r="6.5" fill="#1a88c8"/>
<circle cx="8" cy="8" r="5" fill="#0a2a40"/>
<circle cx="8" cy="8" r="4.3" fill="#c8e0f0"/><path d="M8 5 V11 M5 8 H11" stroke="#3a4a5a" stroke-width="1.3"/></svg><svg style="position:absolute;left:987px;top:57px" width="16" height="16" viewBox="0 0 16 16"><circle cx="8" cy="8" r="7.3" fill="#0a2a40"/>
<circle cx="8" cy="8" r="6.5" fill="#1a88c8"/>
<circle cx="8" cy="8" r="5" fill="#0a2a40"/>
<circle cx="8" cy="8" r="4.3" fill="#c8e0f0"/><path d="M5 8 H11" stroke="#4a5a6a" stroke-width="1.5"/></svg><svg style="position:absolute;left:1009px;top:57px" width="16" height="16" viewBox="0 0 16 16"><path d="M1 11.5 L9 14 L14 13 L12 5 L9 9Z" fill="#1a88d8"/><path d="M10 5 L13 4 L12 8Z" fill="#40c040"/><path d="M10 9 L13 7 L12 11Z" fill="#e8d000"/><path d="M9.5 9.5 L14.5 14.5" stroke="#6a4a10" stroke-width="2.6" stroke-linecap="round"/>
<path d="M10 10 L14 14" stroke="#d8a040" stroke-width="1.2"/>
<circle cx="6" cy="6" r="5.2" fill="#0a3050"/>
<circle cx="6" cy="6" r="4.2" fill="#c8dcec"/><path d="M6 3.5 V8.5 M3.5 6 H8.5" stroke="#222" stroke-width="1.2"/></svg><svg style="position:absolute;left:1031px;top:57px" width="16" height="16" viewBox="0 0 16 16"><path d="M1 11.5 L9 14 L14 13 L12 5 L9 9Z" fill="#1a88d8"/><path d="M10 5 L13 4 L12 8Z" fill="#40c040"/><path d="M10 9 L13 7 L12 11Z" fill="#e8d000"/><path d="M9.5 9.5 L14.5 14.5" stroke="#6a4a10" stroke-width="2.6" stroke-linecap="round"/>
<path d="M10 10 L14 14" stroke="#d8a040" stroke-width="1.2"/>
<circle cx="6" cy="6" r="5.2" fill="#0a3050"/>
<circle cx="6" cy="6" r="4.2" fill="#c8dcec"/><path d="M3.5 6 H8.5" stroke="#333" stroke-width="1.4"/></svg><svg style="position:absolute;left:1053px;top:57px" width="16" height="16" viewBox="0 0 16 16"><path d="M9.5 9.5 L14.5 14.5" stroke="#6a4a10" stroke-width="2.6" stroke-linecap="round"/>
<path d="M10 10 L14 14" stroke="#d8a040" stroke-width="1.2"/>
<circle cx="6" cy="6" r="5.2" fill="#0a3050"/>
<circle cx="6" cy="6" r="4.2" fill="#c8dcec"/><circle cx="6" cy="6" r="4.2" fill="#2a88d8"/><path d="M2.5 4 Q5 2 7 4 Q6 8 4 9.5 Q2 7 2.5 4Z M8 3 Q10 5 9 8 L7.5 6Z" fill="#60c030"/><path d="M3 8 Q5 10 7 9" stroke="#a060d0" stroke-width="1" fill="none"/></svg><svg style="position:absolute;left:1075px;top:57px" width="16" height="16" viewBox="0 0 16 16"><path d="M9.5 9.5 L14.5 14.5" stroke="#6a4a10" stroke-width="2.6" stroke-linecap="round"/>
<path d="M10 10 L14 14" stroke="#d8a040" stroke-width="1.2"/>
<circle cx="6" cy="6" r="5.2" fill="#0a3050"/>
<circle cx="6" cy="6" r="4.2" fill="#c8dcec"/><text x="6" y="8.6" font-family="Liberation Sans" font-weight="700" font-size="7" fill="#1a3050" text-anchor="middle" letter-spacing="-0.6">1:1</text></svg><svg style="position:absolute;left:1097px;top:57px" width="16" height="16" viewBox="0 0 16 16"><rect x="2.5" y="12.5" width="6" height="3" fill="none" stroke="#6a6a6a" stroke-width="0.8"/><path d="M9.5 9.5 L14.5 14.5" stroke="#6a4a10" stroke-width="2.6" stroke-linecap="round"/>
<path d="M10 10 L14 14" stroke="#d8a040" stroke-width="1.2"/>
<circle cx="6" cy="6" r="5.2" fill="#0a3050"/>
<circle cx="6" cy="6" r="4.2" fill="#c8dcec"/><path d="M4.5 2.5 H7.5 V5.5 H9.5 L6 9.5 L2.5 5.5 H4.5Z" fill="#f0e000" stroke="#6a6a00" stroke-width="0.5"/></svg><svg style="position:absolute;left:1123px;top:57px" width="16" height="16" viewBox="0 0 16 16"><circle cx="8" cy="8" r="7" fill="#e01010"/>
<circle cx="8" cy="8" r="7" fill="none" stroke="#a00000" stroke-width="0.6"/>
<path d="M3 6 Q8 1 13 6" stroke="#ff6060" stroke-width="1" fill="none" opacity="0.6"/>
<rect x="7" y="3" width="2" height="6.5" fill="#fff"/><rect x="7" y="10.8" width="2" height="2" fill="#fff"/></svg><svg style="position:absolute;left:1155px;top:57px" width="16" height="16" viewBox="0 0 16 16"><path d="M9.5 9 L13 12.5" stroke="#000" stroke-width="1.1"/>
<path d="M4 12 L10.5 5.5" stroke="#000" stroke-width="2.4"/>
<path d="M10 1.2 H13 L11.3 3 L12.3 4.2 L14 2.5 V6 L12.5 7 H10 L8.5 6 V3Z" fill="#000"/>
<path d="M1 10 L3 9 H5.5 L7 10.5 V12.5 L6 13.5 V15.5 H3 L4.5 13.8 L3.5 12.8 L1.2 14.5Z" fill="#000"/>
<circle cx="5" cy="3.9" r="2.6" fill="#e05a5a" stroke="#000" stroke-width="0.9"/>
<path d="M3.6 2.8 L6.2 5" stroke="#000" stroke-width="0.7"/></svg><div style="position:absolute;left:69px;top:52px;width:1px;height:25px;background:#8e8e8e;"></div><div style="position:absolute;left:70px;top:52px;width:1px;height:25px;background:#fbfbfb;"></div><div style="position:absolute;left:117px;top:52px;width:1px;height:25px;background:#8e8e8e;"></div><div style="position:absolute;left:118px;top:52px;width:1px;height:25px;background:#fbfbfb;"></div><div style="position:absolute;left:143px;top:52px;width:1px;height:25px;background:#8e8e8e;"></div><div style="position:absolute;left:144px;top:52px;width:1px;height:25px;background:#fbfbfb;"></div><div style="position:absolute;left:213px;top:52px;width:1px;height:25px;background:#8e8e8e;"></div><div style="position:absolute;left:214px;top:52px;width:1px;height:25px;background:#fbfbfb;"></div><div style="position:absolute;left:415px;top:52px;width:1px;height:25px;background:#8e8e8e;"></div><div style="position:absolute;left:416px;top:52px;width:1px;height:25px;background:#fbfbfb;"></div><div style="position:absolute;left:551px;top:52px;width:1px;height:25px;background:#8e8e8e;"></div><div style="position:absolute;left:552px;top:52px;width:1px;height:25px;background:#fbfbfb;"></div><div style="position:absolute;left:687px;top:52px;width:1px;height:25px;background:#8e8e8e;"></div><div style="position:absolute;left:688px;top:52px;width:1px;height:25px;background:#fbfbfb;"></div><div style="position:absolute;left:801px;top:52px;width:1px;height:25px;background:#8e8e8e;"></div><div style="position:absolute;left:802px;top:52px;width:1px;height:25px;background:#fbfbfb;"></div><div style="position:absolute;left:937px;top:52px;width:1px;height:25px;background:#8e8e8e;"></div><div style="position:absolute;left:938px;top:52px;width:1px;height:25px;background:#fbfbfb;"></div><div style="position:absolute;left:1117px;top:52px;width:1px;height:25px;background:#8e8e8e;"></div><div style="position:absolute;left:1118px;top:52px;width:1px;height:25px;background:#fbfbfb;"></div><div style="position:absolute;left:1175px;top:52px;width:1px;height:25px;background:#8e8e8e;"></div><div style="position:absolute;left:1279px;top:26px;width:1px;height:25px;background:#9a9a9a;"></div><div style="position:absolute;left:0px;top:53px;width:1px;height:24px;background:#fbfbfb;"></div><div style="position:absolute;left:1176px;top:76px;width:104px;height:1px;background:#e8e8e8;"></div><div style="position:absolute;left:0px;top:77px;width:1176px;height:1px;background:#767676;"></div><div style="position:absolute;left:1176px;top:77px;width:104px;height:1px;background:#e4e4e4;"></div><div style="position:absolute;left:0px;top:78px;width:1280px;height:1px;background:#767676;"></div><div style="position:absolute;left:0px;top:77px;width:1px;height:650px;background:#767676;"></div><div style="position:absolute;left:1279px;top:77px;width:1px;height:650px;background:#767676;"></div><div style="position:absolute;left:1px;top:79px;width:1278px;height:1px;background:#ffffff;"></div><div style="position:absolute;left:1px;top:79px;width:1px;height:647px;background:#ffffff;"></div><div style="position:absolute;left:1278px;top:79px;width:1px;height:647px;background:#ffffff;"></div><div style="position:absolute;left:2px;top:80px;width:1276px;height:21px;background:#c4d4e9;"></div><div style="position:absolute;left:2px;top:101px;width:1276px;height:2px;background:#767676;"></div><svg style="position:absolute;left:7px;top:82px" width="17" height="17" viewBox="0 0 17 17"><defs><radialGradient id="lg" cx="0.35" cy="0.3" r="0.8"><stop offset="0" stop-color="#ffd24a"/><stop offset="0.6" stop-color="#f5a800"/><stop offset="1" stop-color="#b86a00"/></radialGradient></defs><circle cx="8.5" cy="8.5" r="7.8" fill="url(#lg)"/><path d="M11.5 1.2 Q16.5 3.5 16.2 8.8 Q15.8 14 10 16.2 L12.5 10.5 L10 9.5 Q9 4 11.5 1.2Z" fill="#1a90e0"/><path d="M11 1 Q9 5 10.5 9.5 L12.5 10.5 L9 16.5" fill="none" stroke="#fff" stroke-width="1.6"/></svg><svg style="position:absolute;left:233px;top:83px" width="977" height="16"><defs><pattern id="bumps" x="0" y="0" width="4" height="4" patternUnits="userSpaceOnUse"><rect x="0" y="0" width="1" height="1" fill="#ffffff"/><rect x="1" y="1" width="1" height="1" fill="#505050"/><rect x="2" y="2" width="1" height="1" fill="#ffffff"/><rect x="3" y="3" width="1" height="1" fill="#505050"/></pattern></defs><rect width="977" height="16" fill="url(#bumps)" shape-rendering="crispEdges"/></svg><svg style="position:absolute;left:1214px;top:82px" width="64" height="18" shape-rendering="crispEdges"><rect x="2" y="9" width="5" height="5" fill="none" stroke="#000" stroke-width="2"/><path d="M7 4 V8 H11" fill="none" stroke="#000" stroke-width="1.5"/><path d="M8 7 L12 3" stroke="#444" stroke-width="1.8" shape-rendering="auto"/><path d="M23 5.5 H20 V13.5 H29 V10" fill="none" stroke="#000" stroke-width="1.6"/><path d="M25 3 V7 H29" fill="none" stroke="#000" stroke-width="1.5"/><path d="M26 6 L30 2" stroke="#444" stroke-width="1.8" shape-rendering="auto"/><rect x="47" y="2" width="13" height="12" fill="none" stroke="#000" stroke-width="1.6"/><path d="M50 5 L57 11 M57 5 L50 11" stroke="#444" stroke-width="1.6" shape-rendering="auto"/></svg><div style="position:absolute;left:29px;top:84px;font-family:'Liberation Sans', sans-serif;font-size:13px;font-weight:700;color:#000;white-space:pre;line-height:1;letter-spacing:0.2px;transform-origin:0 0;transform:scaleX(1.11)">Mapa : Mapa de Localização</div><div style="position:absolute;left:2px;top:103px;width:1276px;height:622px;background:#dfdfdf;"></div><div style="position:absolute;left:1px;top:725px;width:1278px;height:1px;background:#ffffff;"></div><div style="position:absolute;left:0px;top:726px;width:1280px;height:1px;background:#767676;"></div><div style="position:absolute;left:3px;top:103px;width:252px;height:1px;background:#e9e9e9;"></div><div style="position:absolute;left:2px;top:103px;width:1px;height:622px;background:#8a8a8a;"></div><div style="position:absolute;left:262px;top:103px;width:1px;height:1px;background:#111;"></div><div style="position:absolute;left:2px;top:80px;width:1px;height:1px;background:#555;"></div><div style="position:absolute;left:255px;top:103px;width:1px;height:622px;background:#ffffff;"></div><div style="position:absolute;left:261px;top:103px;width:1px;height:622px;background:#8e8e8e;"></div><svg style="position:absolute;left:256px;top:105px" width="6" height="24"><path d="M5 0.6 V10.4 L0.1 5.5Z" fill="#000"/><path d="M0 12.6 V22.4 L4.9 17.5Z" fill="#000"/></svg><div style="position:absolute;left:292px;top:112px;width:986px;height:1px;background:#f0f0f0;"></div><div style="position:absolute;left:292px;top:113px;width:986px;height:1px;background:#000;"></div><div style="position:absolute;left:292px;top:129px;width:986px;height:1px;background:#000;"></div><div style="position:absolute;left:292px;top:130px;width:986px;height:1px;background:#f0f0f0;"></div><div style="position:absolute;left:292px;top:114px;width:49px;height:15px;background:#8fb5b0;"></div><div style="position:absolute;left:341px;top:114px;width:72px;height:15px;background:#6b6f68;"></div><div style="position:absolute;left:413px;top:114px;width:598px;height:15px;background:#f0f4ef;"></div><div style="position:absolute;left:1011px;top:114px;width:48px;height:15px;background:#6b6f68;"></div><div style="position:absolute;left:1059px;top:114px;width:219px;height:15px;background:#8fb5b0;"></div><div style="position:absolute;left:317px;top:117px;width:1px;height:11px;background:#000;"></div><div style="position:absolute;left:320px;top:112px;font-family:'Liberation Sans', sans-serif;font-size:13px;font-weight:400;color:#000;white-space:pre;line-height:1;letter-spacing:0px">-1</div><div style="position:absolute;left:341px;top:117px;width:1px;height:11px;background:#000;"></div><div style="position:absolute;left:344px;top:112px;font-family:'Liberation Sans', sans-serif;font-size:13px;font-weight:400;color:#000;white-space:pre;line-height:1;letter-spacing:0px">0</div><div style="position:absolute;left:365px;top:117px;width:1px;height:11px;background:#000;"></div><div style="position:absolute;left:368px;top:112px;font-family:'Liberation Sans', sans-serif;font-size:13px;font-weight:400;color:#000;white-space:pre;line-height:1;letter-spacing:0px">1</div><div style="position:absolute;left:389px;top:117px;width:1px;height:11px;background:#000;"></div><div style="position:absolute;left:392px;top:112px;font-family:'Liberation Sans', sans-serif;font-size:13px;font-weight:400;color:#000;white-space:pre;line-height:1;letter-spacing:0px">2</div><div style="position:absolute;left:414px;top:117px;width:1px;height:11px;background:#000;"></div><div style="position:absolute;left:417px;top:112px;font-family:'Liberation Sans', sans-serif;font-size:13px;font-weight:400;color:#000;white-space:pre;line-height:1;letter-spacing:0px">3</div><div style="position:absolute;left:438px;top:117px;width:1px;height:11px;background:#000;"></div><div style="position:absolute;left:441px;top:112px;font-family:'Liberation Sans', sans-serif;font-size:13px;font-weight:400;color:#000;white-space:pre;line-height:1;letter-spacing:0px">4</div><div style="position:absolute;left:462px;top:117px;width:1px;height:11px;background:#000;"></div><div style="position:absolute;left:465px;top:112px;font-family:'Liberation Sans', sans-serif;font-size:13px;font-weight:400;color:#000;white-space:pre;line-height:1;letter-spacing:0px">5</div><div style="position:absolute;left:486px;top:117px;width:1px;height:11px;background:#000;"></div><div style="position:absolute;left:489px;top:112px;font-family:'Liberation Sans', sans-serif;font-size:13px;font-weight:400;color:#000;white-space:pre;line-height:1;letter-spacing:0px">6</div><div style="position:absolute;left:510px;top:117px;width:1px;height:11px;background:#000;"></div><div style="position:absolute;left:513px;top:112px;font-family:'Liberation Sans', sans-serif;font-size:13px;font-weight:400;color:#000;white-space:pre;line-height:1;letter-spacing:0px">7</div><div style="position:absolute;left:534px;top:117px;width:1px;height:11px;background:#000;"></div><div style="position:absolute;left:537px;top:112px;font-family:'Liberation Sans', sans-serif;font-size:13px;font-weight:400;color:#000;white-space:pre;line-height:1;letter-spacing:0px">8</div><div style="position:absolute;left:559px;top:117px;width:1px;height:11px;background:#000;"></div><div style="position:absolute;left:562px;top:112px;font-family:'Liberation Sans', sans-serif;font-size:13px;font-weight:400;color:#000;white-space:pre;line-height:1;letter-spacing:0px">9</div><div style="position:absolute;left:583px;top:117px;width:1px;height:11px;background:#000;"></div><div style="position:absolute;left:586px;top:112px;font-family:'Liberation Sans', sans-serif;font-size:13px;font-weight:400;color:#000;white-space:pre;line-height:1;letter-spacing:0px">10</div><div style="position:absolute;left:607px;top:117px;width:1px;height:11px;background:#000;"></div><div style="position:absolute;left:610px;top:112px;font-family:'Liberation Sans', sans-serif;font-size:13px;font-weight:400;color:#000;white-space:pre;line-height:1;letter-spacing:0px">11</div><div style="position:absolute;left:631px;top:117px;width:1px;height:11px;background:#000;"></div><div style="position:absolute;left:634px;top:112px;font-family:'Liberation Sans', sans-serif;font-size:13px;font-weight:400;color:#000;white-space:pre;line-height:1;letter-spacing:0px">12</div><div style="position:absolute;left:655px;top:117px;width:1px;height:11px;background:#000;"></div><div style="position:absolute;left:658px;top:112px;font-family:'Liberation Sans', sans-serif;font-size:13px;font-weight:400;color:#000;white-space:pre;line-height:1;letter-spacing:0px">13</div><div style="position:absolute;left:679px;top:117px;width:1px;height:11px;background:#000;"></div><div style="position:absolute;left:682px;top:112px;font-family:'Liberation Sans', sans-serif;font-size:13px;font-weight:400;color:#000;white-space:pre;line-height:1;letter-spacing:0px">14</div><div style="position:absolute;left:704px;top:117px;width:1px;height:11px;background:#000;"></div><div style="position:absolute;left:707px;top:112px;font-family:'Liberation Sans', sans-serif;font-size:13px;font-weight:400;color:#000;white-space:pre;line-height:1;letter-spacing:0px">15</div><div style="position:absolute;left:728px;top:117px;width:1px;height:11px;background:#000;"></div><div style="position:absolute;left:731px;top:112px;font-family:'Liberation Sans', sans-serif;font-size:13px;font-weight:400;color:#000;white-space:pre;line-height:1;letter-spacing:0px">16</div><div style="position:absolute;left:752px;top:117px;width:1px;height:11px;background:#000;"></div><div style="position:absolute;left:755px;top:112px;font-family:'Liberation Sans', sans-serif;font-size:13px;font-weight:400;color:#000;white-space:pre;line-height:1;letter-spacing:0px">17</div><div style="position:absolute;left:776px;top:117px;width:1px;height:11px;background:#000;"></div><div style="position:absolute;left:779px;top:112px;font-family:'Liberation Sans', sans-serif;font-size:13px;font-weight:400;color:#000;white-space:pre;line-height:1;letter-spacing:0px">18</div><div style="position:absolute;left:800px;top:117px;width:1px;height:11px;background:#000;"></div><div style="position:absolute;left:803px;top:112px;font-family:'Liberation Sans', sans-serif;font-size:13px;font-weight:400;color:#000;white-space:pre;line-height:1;letter-spacing:0px">19</div><div style="position:absolute;left:824px;top:117px;width:1px;height:11px;background:#000;"></div><div style="position:absolute;left:827px;top:112px;font-family:'Liberation Sans', sans-serif;font-size:13px;font-weight:400;color:#000;white-space:pre;line-height:1;letter-spacing:0px">20</div><div style="position:absolute;left:849px;top:117px;width:1px;height:11px;background:#000;"></div><div style="position:absolute;left:852px;top:112px;font-family:'Liberation Sans', sans-serif;font-size:13px;font-weight:400;color:#000;white-space:pre;line-height:1;letter-spacing:0px">21</div><div style="position:absolute;left:873px;top:117px;width:1px;height:11px;background:#000;"></div><div style="position:absolute;left:876px;top:112px;font-family:'Liberation Sans', sans-serif;font-size:13px;font-weight:400;color:#000;white-space:pre;line-height:1;letter-spacing:0px">22</div><div style="position:absolute;left:897px;top:117px;width:1px;height:11px;background:#000;"></div><div style="position:absolute;left:900px;top:112px;font-family:'Liberation Sans', sans-serif;font-size:13px;font-weight:400;color:#000;white-space:pre;line-height:1;letter-spacing:0px">23</div><div style="position:absolute;left:921px;top:117px;width:1px;height:11px;background:#000;"></div><div style="position:absolute;left:924px;top:112px;font-family:'Liberation Sans', sans-serif;font-size:13px;font-weight:400;color:#000;white-space:pre;line-height:1;letter-spacing:0px">24</div><div style="position:absolute;left:945px;top:117px;width:1px;height:11px;background:#000;"></div><div style="position:absolute;left:948px;top:112px;font-family:'Liberation Sans', sans-serif;font-size:13px;font-weight:400;color:#000;white-space:pre;line-height:1;letter-spacing:0px">25</div><div style="position:absolute;left:969px;top:117px;width:1px;height:11px;background:#000;"></div><div style="position:absolute;left:972px;top:112px;font-family:'Liberation Sans', sans-serif;font-size:13px;font-weight:400;color:#000;white-space:pre;line-height:1;letter-spacing:0px">26</div><div style="position:absolute;left:993px;top:117px;width:1px;height:11px;background:#000;"></div><div style="position:absolute;left:996px;top:112px;font-family:'Liberation Sans', sans-serif;font-size:13px;font-weight:400;color:#000;white-space:pre;line-height:1;letter-spacing:0px">27</div><div style="position:absolute;left:1018px;top:117px;width:1px;height:11px;background:#000;"></div><div style="position:absolute;left:1021px;top:112px;font-family:'Liberation Sans', sans-serif;font-size:13px;font-weight:400;color:#000;white-space:pre;line-height:1;letter-spacing:0px">28</div><div style="position:absolute;left:1042px;top:117px;width:1px;height:11px;background:#000;"></div><div style="position:absolute;left:1045px;top:112px;font-family:'Liberation Sans', sans-serif;font-size:13px;font-weight:400;color:#000;white-space:pre;line-height:1;letter-spacing:0px">29</div><div style="position:absolute;left:1066px;top:117px;width:1px;height:11px;background:#000;"></div><div style="position:absolute;left:1069px;top:112px;font-family:'Liberation Sans', sans-serif;font-size:13px;font-weight:400;color:#000;white-space:pre;line-height:1;letter-spacing:0px">30</div><div style="position:absolute;left:1090px;top:117px;width:1px;height:11px;background:#000;"></div><div style="position:absolute;left:1093px;top:112px;font-family:'Liberation Sans', sans-serif;font-size:13px;font-weight:400;color:#000;white-space:pre;line-height:1;letter-spacing:0px">31</div><div style="position:absolute;left:1114px;top:117px;width:1px;height:11px;background:#000;"></div><div style="position:absolute;left:1117px;top:112px;font-family:'Liberation Sans', sans-serif;font-size:13px;font-weight:400;color:#000;white-space:pre;line-height:1;letter-spacing:0px">32</div><div style="position:absolute;left:1138px;top:117px;width:1px;height:11px;background:#000;"></div><div style="position:absolute;left:1141px;top:112px;font-family:'Liberation Sans', sans-serif;font-size:13px;font-weight:400;color:#000;white-space:pre;line-height:1;letter-spacing:0px">33</div><div style="position:absolute;left:1163px;top:117px;width:1px;height:11px;background:#000;"></div><div style="position:absolute;left:1166px;top:112px;font-family:'Liberation Sans', sans-serif;font-size:13px;font-weight:400;color:#000;white-space:pre;line-height:1;letter-spacing:0px">34</div><div style="position:absolute;left:1187px;top:117px;width:1px;height:11px;background:#000;"></div><div style="position:absolute;left:1190px;top:112px;font-family:'Liberation Sans', sans-serif;font-size:13px;font-weight:400;color:#000;white-space:pre;line-height:1;letter-spacing:0px">35</div><div style="position:absolute;left:1211px;top:117px;width:1px;height:11px;background:#000;"></div><div style="position:absolute;left:1214px;top:112px;font-family:'Liberation Sans', sans-serif;font-size:13px;font-weight:400;color:#000;white-space:pre;line-height:1;letter-spacing:0px">36</div><div style="position:absolute;left:1235px;top:117px;width:1px;height:11px;background:#000;"></div><div style="position:absolute;left:1238px;top:112px;font-family:'Liberation Sans', sans-serif;font-size:13px;font-weight:400;color:#000;white-space:pre;line-height:1;letter-spacing:0px">37</div><div style="position:absolute;left:1259px;top:117px;width:1px;height:11px;background:#000;"></div><div style="position:absolute;left:1262px;top:112px;font-family:'Liberation Sans', sans-serif;font-size:13px;font-weight:400;color:#000;white-space:pre;line-height:1;letter-spacing:0px">38</div><div style="position:absolute;left:272px;top:133px;width:1px;height:592px;background:#000;"></div><div style="position:absolute;left:288px;top:133px;width:1px;height:592px;background:#000;"></div><div style="position:absolute;left:272px;top:133px;width:17px;height:1px;background:#000;"></div><div style="position:absolute;left:273px;top:134px;width:15px;height:48px;background:#8fb5b0;"></div><div style="position:absolute;left:273px;top:182px;width:15px;height:12px;background:#6b6f68;"></div><div style="position:absolute;left:273px;top:194px;width:15px;height:496px;background:#f0f4ef;"></div><div style="position:absolute;left:273px;top:690px;width:15px;height:35px;background:#8fb5b0;"></div><div style="position:absolute;left:276px;top:158px;width:11px;height:1px;background:#000;"></div><div style="position:absolute;left:276px;top:182px;width:11px;height:1px;background:#000;"></div><div style="position:absolute;left:276px;top:206px;width:11px;height:1px;background:#000;"></div><div style="position:absolute;left:276px;top:230px;width:11px;height:1px;background:#000;"></div><div style="position:absolute;left:276px;top:254px;width:11px;height:1px;background:#000;"></div><div style="position:absolute;left:276px;top:279px;width:11px;height:1px;background:#000;"></div><div style="position:absolute;left:276px;top:303px;width:11px;height:1px;background:#000;"></div><div style="position:absolute;left:276px;top:327px;width:11px;height:1px;background:#000;"></div><div style="position:absolute;left:276px;top:351px;width:11px;height:1px;background:#000;"></div><div style="position:absolute;left:276px;top:375px;width:11px;height:1px;background:#000;"></div><div style="position:absolute;left:276px;top:399px;width:11px;height:1px;background:#000;"></div><div style="position:absolute;left:276px;top:424px;width:11px;height:1px;background:#000;"></div><div style="position:absolute;left:276px;top:448px;width:11px;height:1px;background:#000;"></div><div style="position:absolute;left:276px;top:472px;width:11px;height:1px;background:#000;"></div><div style="position:absolute;left:276px;top:496px;width:11px;height:1px;background:#000;"></div><div style="position:absolute;left:276px;top:520px;width:11px;height:1px;background:#000;"></div><div style="position:absolute;left:276px;top:544px;width:11px;height:1px;background:#000;"></div><div style="position:absolute;left:276px;top:569px;width:11px;height:1px;background:#000;"></div><div style="position:absolute;left:276px;top:593px;width:11px;height:1px;background:#000;"></div><div style="position:absolute;left:276px;top:617px;width:11px;height:1px;background:#000;"></div><div style="position:absolute;left:276px;top:641px;width:11px;height:1px;background:#000;"></div><div style="position:absolute;left:276px;top:665px;width:11px;height:1px;background:#000;"></div><div style="position:absolute;left:276px;top:689px;width:11px;height:1px;background:#000;"></div><div style="position:absolute;left:276px;top:714px;width:11px;height:1px;background:#000;"></div><div style="position:absolute;left:273px;top:134px;width:15px;height:591px;overflow:hidden"><div style="position:absolute;left:-3px;top:22px;width:0;height:0"><div style="position:absolute;left:0;top:0;transform-origin:0 0;transform:rotate(-90deg);font-family:'Liberation Sans', sans-serif;font-size:13px;line-height:1;white-space:pre;color:#000">-1</div></div><div style="position:absolute;left:-3px;top:46px;width:0;height:0"><div style="position:absolute;left:0;top:0;transform-origin:0 0;transform:rotate(-90deg);font-family:'Liberation Sans', sans-serif;font-size:13px;line-height:1;white-space:pre;color:#000">0</div></div><div style="position:absolute;left:-3px;top:70px;width:0;height:0"><div style="position:absolute;left:0;top:0;transform-origin:0 0;transform:rotate(-90deg);font-family:'Liberation Sans', sans-serif;font-size:13px;line-height:1;white-space:pre;color:#000">1</div></div><div style="position:absolute;left:-3px;top:94px;width:0;height:0"><div style="position:absolute;left:0;top:0;transform-origin:0 0;transform:rotate(-90deg);font-family:'Liberation Sans', sans-serif;font-size:13px;line-height:1;white-space:pre;color:#000">2</div></div><div style="position:absolute;left:-3px;top:118px;width:0;height:0"><div style="position:absolute;left:0;top:0;transform-origin:0 0;transform:rotate(-90deg);font-family:'Liberation Sans', sans-serif;font-size:13px;line-height:1;white-space:pre;color:#000">3</div></div><div style="position:absolute;left:-3px;top:143px;width:0;height:0"><div style="position:absolute;left:0;top:0;transform-origin:0 0;transform:rotate(-90deg);font-family:'Liberation Sans', sans-serif;font-size:13px;line-height:1;white-space:pre;color:#000">4</div></div><div style="position:absolute;left:-3px;top:167px;width:0;height:0"><div style="position:absolute;left:0;top:0;transform-origin:0 0;transform:rotate(-90deg);font-family:'Liberation Sans', sans-serif;font-size:13px;line-height:1;white-space:pre;color:#000">5</div></div><div style="position:absolute;left:-3px;top:191px;width:0;height:0"><div style="position:absolute;left:0;top:0;transform-origin:0 0;transform:rotate(-90deg);font-family:'Liberation Sans', sans-serif;font-size:13px;line-height:1;white-space:pre;color:#000">6</div></div><div style="position:absolute;left:-3px;top:215px;width:0;height:0"><div style="position:absolute;left:0;top:0;transform-origin:0 0;transform:rotate(-90deg);font-family:'Liberation Sans', sans-serif;font-size:13px;line-height:1;white-space:pre;color:#000">7</div></div><div style="position:absolute;left:-3px;top:239px;width:0;height:0"><div style="position:absolute;left:0;top:0;transform-origin:0 0;transform:rotate(-90deg);font-family:'Liberation Sans', sans-serif;font-size:13px;line-height:1;white-space:pre;color:#000">8</div></div><div style="position:absolute;left:-3px;top:263px;width:0;height:0"><div style="position:absolute;left:0;top:0;transform-origin:0 0;transform:rotate(-90deg);font-family:'Liberation Sans', sans-serif;font-size:13px;line-height:1;white-space:pre;color:#000">9</div></div><div style="position:absolute;left:-3px;top:288px;width:0;height:0"><div style="position:absolute;left:0;top:0;transform-origin:0 0;transform:rotate(-90deg);font-family:'Liberation Sans', sans-serif;font-size:13px;line-height:1;white-space:pre;color:#000">10</div></div><div style="position:absolute;left:-3px;top:312px;width:0;height:0"><div style="position:absolute;left:0;top:0;transform-origin:0 0;transform:rotate(-90deg);font-family:'Liberation Sans', sans-serif;font-size:13px;line-height:1;white-space:pre;color:#000">11</div></div><div style="position:absolute;left:-3px;top:336px;width:0;height:0"><div style="position:absolute;left:0;top:0;transform-origin:0 0;transform:rotate(-90deg);font-family:'Liberation Sans', sans-serif;font-size:13px;line-height:1;white-space:pre;color:#000">12</div></div><div style="position:absolute;left:-3px;top:360px;width:0;height:0"><div style="position:absolute;left:0;top:0;transform-origin:0 0;transform:rotate(-90deg);font-family:'Liberation Sans', sans-serif;font-size:13px;line-height:1;white-space:pre;color:#000">13</div></div><div style="position:absolute;left:-3px;top:384px;width:0;height:0"><div style="position:absolute;left:0;top:0;transform-origin:0 0;transform:rotate(-90deg);font-family:'Liberation Sans', sans-serif;font-size:13px;line-height:1;white-space:pre;color:#000">14</div></div><div style="position:absolute;left:-3px;top:408px;width:0;height:0"><div style="position:absolute;left:0;top:0;transform-origin:0 0;transform:rotate(-90deg);font-family:'Liberation Sans', sans-serif;font-size:13px;line-height:1;white-space:pre;color:#000">15</div></div><div style="position:absolute;left:-3px;top:433px;width:0;height:0"><div style="position:absolute;left:0;top:0;transform-origin:0 0;transform:rotate(-90deg);font-family:'Liberation Sans', sans-serif;font-size:13px;line-height:1;white-space:pre;color:#000">16</div></div><div style="position:absolute;left:-3px;top:457px;width:0;height:0"><div style="position:absolute;left:0;top:0;transform-origin:0 0;transform:rotate(-90deg);font-family:'Liberation Sans', sans-serif;font-size:13px;line-height:1;white-space:pre;color:#000">17</div></div><div style="position:absolute;left:-3px;top:481px;width:0;height:0"><div style="position:absolute;left:0;top:0;transform-origin:0 0;transform:rotate(-90deg);font-family:'Liberation Sans', sans-serif;font-size:13px;line-height:1;white-space:pre;color:#000">18</div></div><div style="position:absolute;left:-3px;top:505px;width:0;height:0"><div style="position:absolute;left:0;top:0;transform-origin:0 0;transform:rotate(-90deg);font-family:'Liberation Sans', sans-serif;font-size:13px;line-height:1;white-space:pre;color:#000">19</div></div><div style="position:absolute;left:-3px;top:529px;width:0;height:0"><div style="position:absolute;left:0;top:0;transform-origin:0 0;transform:rotate(-90deg);font-family:'Liberation Sans', sans-serif;font-size:13px;line-height:1;white-space:pre;color:#000">20</div></div><div style="position:absolute;left:-3px;top:553px;width:0;height:0"><div style="position:absolute;left:0;top:0;transform-origin:0 0;transform:rotate(-90deg);font-family:'Liberation Sans', sans-serif;font-size:13px;line-height:1;white-space:pre;color:#000">21</div></div><div style="position:absolute;left:-3px;top:578px;width:0;height:0"><div style="position:absolute;left:0;top:0;transform-origin:0 0;transform:rotate(-90deg);font-family:'Liberation Sans', sans-serif;font-size:13px;line-height:1;white-space:pre;color:#000">22</div></div><div style="position:absolute;left:-3px;top:602px;width:0;height:0"><div style="position:absolute;left:0;top:0;transform-origin:0 0;transform:rotate(-90deg);font-family:'Liberation Sans', sans-serif;font-size:13px;line-height:1;white-space:pre;color:#000">23</div></div></div><div style="position:absolute;left:264px;top:150px;width:13px;height:3px;background:#ffffff;opacity:0.6"></div><div style="position:absolute;left:269px;top:145px;width:3px;height:13px;background:#ffffff;opacity:0.6"></div><div style="position:absolute;left:265px;top:151px;width:11px;height:1px;background:#000;"></div><div style="position:absolute;left:270px;top:146px;width:1px;height:11px;background:#000;"></div><div style="position:absolute;left:348px;top:189px;width:717px;height:507px;background:#424242;"></div><div style="position:absolute;left:341px;top:182px;width:719px;height:508px;background:#ffffff;"></div><div style="position:absolute;left:341px;top:182px;width:718px;height:1px;background:#404040;"></div><div style="position:absolute;left:341px;top:182px;width:1px;height:508px;background:#404040;"></div><div style="position:absolute;left:1058px;top:182px;width:1px;height:508px;background:#404040;"></div><div style="position:absolute;left:341px;top:689px;width:718px;height:1px;background:#404040;"></div><div style="position:absolute;left:414px;top:194px;width:597px;height:1px;background:#000;"></div><div style="position:absolute;left:414px;top:194px;width:1px;height:496px;background:#000;"></div><div style="position:absolute;left:1010px;top:194px;width:1px;height:496px;background:#000;"></div><div style="position:absolute;left:414px;top:689px;width:597px;height:1px;background:#000;"></div><svg style="position:absolute;left:0;top:0" width="1280" height="749"><path d="M438 194h1v1h-1zM462 194h1v1h-1zM486 194h1v1h-1zM510 194h1v1h-1zM534 194h1v1h-1zM558 194h1v1h-1zM583 194h1v1h-1zM607 194h1v1h-1zM631 194h1v1h-1zM655 194h1v1h-1zM679 194h1v1h-1zM703 194h1v1h-1zM728 194h1v1h-1zM752 194h1v1h-1zM776 194h1v1h-1zM800 194h1v1h-1zM824 194h1v1h-1zM848 194h1v1h-1zM873 194h1v1h-1zM897 194h1v1h-1zM921 194h1v1h-1zM945 194h1v1h-1zM969 194h1v1h-1zM993 194h1v1h-1zM414 218h1v1h-1zM414 242h1v1h-1zM414 267h1v1h-1zM414 291h1v1h-1zM414 315h1v1h-1zM414 339h1v1h-1zM414 363h1v1h-1zM414 387h1v1h-1zM414 412h1v1h-1zM414 436h1v1h-1zM414 460h1v1h-1zM414 484h1v1h-1zM414 508h1v1h-1zM414 532h1v1h-1zM414 557h1v1h-1zM414 581h1v1h-1zM414 605h1v1h-1zM414 629h1v1h-1zM414 653h1v1h-1zM414 677h1v1h-1z" fill="#505050" shape-rendering="crispEdges"/></svg><svg style="position:absolute;left:0;top:0" width="1280" height="749"><path d="M438 218h1v1h-1zM438 242h1v1h-1zM438 267h1v1h-1zM438 291h1v1h-1zM438 315h1v1h-1zM438 339h1v1h-1zM438 363h1v1h-1zM438 387h1v1h-1zM438 412h1v1h-1zM438 436h1v1h-1zM438 460h1v1h-1zM438 484h1v1h-1zM438 508h1v1h-1zM438 532h1v1h-1zM438 557h1v1h-1zM438 581h1v1h-1zM438 605h1v1h-1zM438 629h1v1h-1zM438 653h1v1h-1zM438 677h1v1h-1zM462 218h1v1h-1zM462 242h1v1h-1zM462 267h1v1h-1zM462 291h1v1h-1zM462 315h1v1h-1zM462 339h1v1h-1zM462 363h1v1h-1zM462 387h1v1h-1zM462 412h1v1h-1zM462 436h1v1h-1zM462 460h1v1h-1zM462 484h1v1h-1zM462 508h1v1h-1zM462 532h1v1h-1zM462 557h1v1h-1zM462 581h1v1h-1zM462 605h1v1h-1zM462 629h1v1h-1zM462 653h1v1h-1zM462 677h1v1h-1zM486 218h1v1h-1zM486 242h1v1h-1zM486 267h1v1h-1zM486 291h1v1h-1zM486 315h1v1h-1zM486 339h1v1h-1zM486 363h1v1h-1zM486 387h1v1h-1zM486 412h1v1h-1zM486 436h1v1h-1zM486 460h1v1h-1zM486 484h1v1h-1zM486 508h1v1h-1zM486 532h1v1h-1zM486 557h1v1h-1zM486 581h1v1h-1zM486 605h1v1h-1zM486 629h1v1h-1zM486 653h1v1h-1zM486 677h1v1h-1zM510 218h1v1h-1zM510 242h1v1h-1zM510 267h1v1h-1zM510 291h1v1h-1zM510 315h1v1h-1zM510 339h1v1h-1zM510 363h1v1h-1zM510 387h1v1h-1zM510 412h1v1h-1zM510 436h1v1h-1zM510 460h1v1h-1zM510 484h1v1h-1zM510 508h1v1h-1zM510 532h1v1h-1zM510 557h1v1h-1zM510 581h1v1h-1zM510 605h1v1h-1zM510 629h1v1h-1zM510 653h1v1h-1zM510 677h1v1h-1zM534 218h1v1h-1zM534 242h1v1h-1zM534 267h1v1h-1zM534 291h1v1h-1zM534 315h1v1h-1zM534 339h1v1h-1zM534 363h1v1h-1zM534 387h1v1h-1zM534 412h1v1h-1zM534 436h1v1h-1zM534 460h1v1h-1zM534 484h1v1h-1zM534 508h1v1h-1zM534 532h1v1h-1zM534 557h1v1h-1zM534 581h1v1h-1zM534 605h1v1h-1zM534 629h1v1h-1zM534 653h1v1h-1zM534 677h1v1h-1zM558 218h1v1h-1zM558 242h1v1h-1zM558 267h1v1h-1zM558 291h1v1h-1zM558 315h1v1h-1zM558 339h1v1h-1zM558 363h1v1h-1zM558 387h1v1h-1zM558 412h1v1h-1zM558 436h1v1h-1zM558 460h1v1h-1zM558 484h1v1h-1zM558 508h1v1h-1zM558 532h1v1h-1zM558 557h1v1h-1zM558 581h1v1h-1zM558 605h1v1h-1zM558 629h1v1h-1zM558 653h1v1h-1zM558 677h1v1h-1zM583 218h1v1h-1zM583 242h1v1h-1zM583 267h1v1h-1zM583 291h1v1h-1zM583 315h1v1h-1zM583 339h1v1h-1zM583 363h1v1h-1zM583 387h1v1h-1zM583 412h1v1h-1zM583 436h1v1h-1zM583 460h1v1h-1zM583 484h1v1h-1zM583 508h1v1h-1zM583 532h1v1h-1zM583 557h1v1h-1zM583 581h1v1h-1zM583 605h1v1h-1zM583 629h1v1h-1zM583 653h1v1h-1zM583 677h1v1h-1zM607 218h1v1h-1zM607 242h1v1h-1zM607 267h1v1h-1zM607 291h1v1h-1zM607 315h1v1h-1zM607 339h1v1h-1zM607 363h1v1h-1zM607 387h1v1h-1zM607 412h1v1h-1zM607 436h1v1h-1zM607 460h1v1h-1zM607 484h1v1h-1zM607 508h1v1h-1zM607 532h1v1h-1zM607 557h1v1h-1zM607 581h1v1h-1zM607 605h1v1h-1zM607 629h1v1h-1zM607 653h1v1h-1zM607 677h1v1h-1zM631 218h1v1h-1zM631 242h1v1h-1zM631 267h1v1h-1zM631 291h1v1h-1zM631 315h1v1h-1zM631 339h1v1h-1zM631 363h1v1h-1zM631 387h1v1h-1zM631 412h1v1h-1zM631 436h1v1h-1zM631 460h1v1h-1zM631 484h1v1h-1zM631 508h1v1h-1zM631 532h1v1h-1zM631 557h1v1h-1zM631 581h1v1h-1zM631 605h1v1h-1zM631 629h1v1h-1zM631 653h1v1h-1zM631 677h1v1h-1zM655 218h1v1h-1zM655 242h1v1h-1zM655 267h1v1h-1zM655 291h1v1h-1zM655 315h1v1h-1zM655 339h1v1h-1zM655 363h1v1h-1zM655 387h1v1h-1zM655 412h1v1h-1zM655 436h1v1h-1zM655 460h1v1h-1zM655 484h1v1h-1zM655 508h1v1h-1zM655 532h1v1h-1zM655 557h1v1h-1zM655 581h1v1h-1zM655 605h1v1h-1zM655 629h1v1h-1zM655 653h1v1h-1zM655 677h1v1h-1zM679 218h1v1h-1zM679 242h1v1h-1zM679 267h1v1h-1zM679 291h1v1h-1zM679 315h1v1h-1zM679 339h1v1h-1zM679 363h1v1h-1zM679 387h1v1h-1zM679 412h1v1h-1zM679 436h1v1h-1zM679 460h1v1h-1zM679 484h1v1h-1zM679 508h1v1h-1zM679 532h1v1h-1zM679 557h1v1h-1zM679 581h1v1h-1zM679 605h1v1h-1zM679 629h1v1h-1zM679 653h1v1h-1zM679 677h1v1h-1zM703 218h1v1h-1zM703 242h1v1h-1zM703 267h1v1h-1zM703 291h1v1h-1zM703 315h1v1h-1zM703 339h1v1h-1zM703 363h1v1h-1zM703 387h1v1h-1zM703 412h1v1h-1zM703 436h1v1h-1zM703 460h1v1h-1zM703 484h1v1h-1zM703 508h1v1h-1zM703 532h1v1h-1zM703 557h1v1h-1zM703 581h1v1h-1zM703 605h1v1h-1zM703 629h1v1h-1zM703 653h1v1h-1zM703 677h1v1h-1zM728 218h1v1h-1zM728 242h1v1h-1zM728 267h1v1h-1zM728 291h1v1h-1zM728 315h1v1h-1zM728 339h1v1h-1zM728 363h1v1h-1zM728 387h1v1h-1zM728 412h1v1h-1zM728 436h1v1h-1zM728 460h1v1h-1zM728 484h1v1h-1zM728 508h1v1h-1zM728 532h1v1h-1zM728 557h1v1h-1zM728 581h1v1h-1zM728 605h1v1h-1zM728 629h1v1h-1zM728 653h1v1h-1zM728 677h1v1h-1zM752 218h1v1h-1zM752 242h1v1h-1zM752 267h1v1h-1zM752 291h1v1h-1zM752 315h1v1h-1zM752 339h1v1h-1zM752 363h1v1h-1zM752 387h1v1h-1zM752 412h1v1h-1zM752 436h1v1h-1zM752 460h1v1h-1zM752 484h1v1h-1zM752 508h1v1h-1zM752 532h1v1h-1zM752 557h1v1h-1zM752 581h1v1h-1zM752 605h1v1h-1zM752 629h1v1h-1zM752 653h1v1h-1zM752 677h1v1h-1zM776 218h1v1h-1zM776 242h1v1h-1zM776 267h1v1h-1zM776 291h1v1h-1zM776 315h1v1h-1zM776 339h1v1h-1zM776 363h1v1h-1zM776 387h1v1h-1zM776 412h1v1h-1zM776 436h1v1h-1zM776 460h1v1h-1zM776 484h1v1h-1zM776 508h1v1h-1zM776 532h1v1h-1zM776 557h1v1h-1zM776 581h1v1h-1zM776 605h1v1h-1zM776 629h1v1h-1zM776 653h1v1h-1zM776 677h1v1h-1zM800 218h1v1h-1zM800 242h1v1h-1zM800 267h1v1h-1zM800 291h1v1h-1zM800 315h1v1h-1zM800 339h1v1h-1zM800 363h1v1h-1zM800 387h1v1h-1zM800 412h1v1h-1zM800 436h1v1h-1zM800 460h1v1h-1zM800 484h1v1h-1zM800 508h1v1h-1zM800 532h1v1h-1zM800 557h1v1h-1zM800 581h1v1h-1zM800 605h1v1h-1zM800 629h1v1h-1zM800 653h1v1h-1zM800 677h1v1h-1zM824 218h1v1h-1zM824 242h1v1h-1zM824 267h1v1h-1zM824 291h1v1h-1zM824 315h1v1h-1zM824 339h1v1h-1zM824 363h1v1h-1zM824 387h1v1h-1zM824 412h1v1h-1zM824 436h1v1h-1zM824 460h1v1h-1zM824 484h1v1h-1zM824 508h1v1h-1zM824 532h1v1h-1zM824 557h1v1h-1zM824 581h1v1h-1zM824 605h1v1h-1zM824 629h1v1h-1zM824 653h1v1h-1zM824 677h1v1h-1zM848 218h1v1h-1zM848 242h1v1h-1zM848 267h1v1h-1zM848 291h1v1h-1zM848 315h1v1h-1zM848 339h1v1h-1zM848 363h1v1h-1zM848 387h1v1h-1zM848 412h1v1h-1zM848 436h1v1h-1zM848 460h1v1h-1zM848 484h1v1h-1zM848 508h1v1h-1zM848 532h1v1h-1zM848 557h1v1h-1zM848 581h1v1h-1zM848 605h1v1h-1zM848 629h1v1h-1zM848 653h1v1h-1zM848 677h1v1h-1zM873 218h1v1h-1zM873 242h1v1h-1zM873 267h1v1h-1zM873 291h1v1h-1zM873 315h1v1h-1zM873 339h1v1h-1zM873 363h1v1h-1zM873 387h1v1h-1zM873 412h1v1h-1zM873 436h1v1h-1zM873 460h1v1h-1zM873 484h1v1h-1zM873 508h1v1h-1zM873 532h1v1h-1zM873 557h1v1h-1zM873 581h1v1h-1zM873 605h1v1h-1zM873 629h1v1h-1zM873 653h1v1h-1zM873 677h1v1h-1zM897 218h1v1h-1zM897 242h1v1h-1zM897 267h1v1h-1zM897 291h1v1h-1zM897 315h1v1h-1zM897 339h1v1h-1zM897 363h1v1h-1zM897 387h1v1h-1zM897 412h1v1h-1zM897 436h1v1h-1zM897 460h1v1h-1zM897 484h1v1h-1zM897 508h1v1h-1zM897 532h1v1h-1zM897 557h1v1h-1zM897 581h1v1h-1zM897 605h1v1h-1zM897 629h1v1h-1zM897 653h1v1h-1zM897 677h1v1h-1zM921 218h1v1h-1zM921 242h1v1h-1zM921 267h1v1h-1zM921 291h1v1h-1zM921 315h1v1h-1zM921 339h1v1h-1zM921 363h1v1h-1zM921 387h1v1h-1zM921 412h1v1h-1zM921 436h1v1h-1zM921 460h1v1h-1zM921 484h1v1h-1zM921 508h1v1h-1zM921 532h1v1h-1zM921 557h1v1h-1zM921 581h1v1h-1zM921 605h1v1h-1zM921 629h1v1h-1zM921 653h1v1h-1zM921 677h1v1h-1zM945 218h1v1h-1zM945 242h1v1h-1zM945 267h1v1h-1zM945 291h1v1h-1zM945 315h1v1h-1zM945 339h1v1h-1zM945 363h1v1h-1zM945 387h1v1h-1zM945 412h1v1h-1zM945 436h1v1h-1zM945 460h1v1h-1zM945 484h1v1h-1zM945 508h1v1h-1zM945 532h1v1h-1zM945 557h1v1h-1zM945 581h1v1h-1zM945 605h1v1h-1zM945 629h1v1h-1zM945 653h1v1h-1zM945 677h1v1h-1zM969 218h1v1h-1zM969 242h1v1h-1zM969 267h1v1h-1zM969 291h1v1h-1zM969 315h1v1h-1zM969 339h1v1h-1zM969 363h1v1h-1zM969 387h1v1h-1zM969 412h1v1h-1zM969 436h1v1h-1zM969 460h1v1h-1zM969 484h1v1h-1zM969 508h1v1h-1zM969 532h1v1h-1zM969 557h1v1h-1zM969 581h1v1h-1zM969 605h1v1h-1zM969 629h1v1h-1zM969 653h1v1h-1zM969 677h1v1h-1zM993 218h1v1h-1zM993 242h1v1h-1zM993 267h1v1h-1zM993 291h1v1h-1zM993 315h1v1h-1zM993 339h1v1h-1zM993 363h1v1h-1zM993 387h1v1h-1zM993 412h1v1h-1zM993 436h1v1h-1zM993 460h1v1h-1zM993 484h1v1h-1zM993 508h1v1h-1zM993 532h1v1h-1zM993 557h1v1h-1zM993 581h1v1h-1zM993 605h1v1h-1zM993 629h1v1h-1zM993 653h1v1h-1zM993 677h1v1h-1z" fill="#3a3a3a" shape-rendering="crispEdges"/></svg><div style="position:absolute;left:0px;top:727px;width:1280px;height:22px;background:#dfdfdf;"></div><svg style="position:absolute;left:5px;top:729px" width="8" height="14"><circle cx="3.6" cy="2" r="1.6" fill="#1010e0"/><path d="M1 5.5 H5 V12 H6.5 V13 H1 V12 H2.5 V6.5 H1Z" fill="#1010e0"/></svg><div style="position:absolute;left:18px;top:728px;font-family:'Liberation Sans', sans-serif;font-size:13px;font-weight:400;color:#1a1a1a;white-space:pre;line-height:1;letter-spacing:0.4px">Inserir Vista</div><div style="position:absolute;left:517px;top:731px;font-family:'Liberation Sans', sans-serif;font-size:13px;font-weight:400;color:#1a1a1a;white-space:pre;line-height:1;letter-spacing:0.3px">1:</div><div style="position:absolute;left:529px;top:728px;width:85px;height:21px;background:#ffffff;box-sizing:border-box;border:1px solid #b8b8b8;border-radius:2px"></div><div style="position:absolute;left:599px;top:728px;width:15px;height:21px;background:#e4e4e4;box-sizing:border-box;border:1px solid #b8b8b8;border-radius:0 2px 2px 0"></div><svg style="position:absolute;left:601px;top:735px" width="10" height="6"><path d="M1 1 H9 L5 5Z" fill="#8a8a8a"/></svg><div style="position:absolute;left:531px;top:731px;font-family:'Liberation Sans', sans-serif;font-size:13px;font-weight:400;color:#a8a8a8;white-space:pre;line-height:1;letter-spacing:0.75px">10.000</div><div style="position:absolute;left:616px;top:729px;width:79px;height:18px;background:#e2e2e2;box-sizing:border-box;border-top:1px solid #6a6a6a;border-left:1px solid #6a6a6a;border-bottom:1px solid #fff;border-right:1px solid #fff"></div><div style="position:absolute;left:618px;top:731px;font-family:'Liberation Sans', sans-serif;font-size:13px;font-weight:400;color:#1a1a1a;white-space:pre;line-height:1;letter-spacing:0.38px">Centímetros</div><div style="position:absolute;left:697px;top:729px;width:119px;height:18px;background:#e2e2e2;box-sizing:border-box;border-top:1px solid #6a6a6a;border-left:1px solid #6a6a6a;border-bottom:1px solid #fff;border-right:1px solid #fff"></div><div style="position:absolute;left:699px;top:731px;font-family:'Liberation Sans', sans-serif;font-size:13px;font-weight:400;color:#1a1a1a;white-space:pre;line-height:1;letter-spacing:0.56px">Lon = -53° 2&#39; 37&#39;&#39;</div><div style="position:absolute;left:817px;top:729px;width:116px;height:18px;background:#e2e2e2;box-sizing:border-box;border-top:1px solid #6a6a6a;border-left:1px solid #6a6a6a;border-bottom:1px solid #fff;border-right:1px solid #fff"></div><div style="position:absolute;left:819px;top:731px;font-family:'Liberation Sans', sans-serif;font-size:13px;font-weight:400;color:#1a1a1a;white-space:pre;line-height:1;letter-spacing:0.58px">Lat = -29° 20&#39; 19&#39;&#39;</div><div style="position:absolute;left:934px;top:729px;width:72px;height:18px;background:#e2e2e2;box-sizing:border-box;border-top:1px solid #6a6a6a;border-left:1px solid #6a6a6a;border-bottom:1px solid #fff;border-right:1px solid #fff"></div><div style="position:absolute;left:936px;top:731px;font-family:'Liberation Sans', sans-serif;font-size:13px;font-weight:400;color:#1a1a1a;white-space:pre;line-height:1;letter-spacing:0px">EPSG:4326</div><div style="position:absolute;left:548px;top:93px;width:82px;height:16px;background:#c4d4e9;box-sizing:border-box;border:1px solid #6a6a6a"></div><div style="position:absolute;left:552px;top:94px;font-family:'Liberation Sans', sans-serif;font-size:13px;font-weight:400;color:#1a1a1a;white-space:pre;line-height:1;letter-spacing:0.4px">Inserir Vista</div><svg style="position:absolute;left:538px;top:69px" width="16" height="22"><path d="M0.5 0.5 V17.5 L4.3 13.8 L7.3 20.5 L10 19.3 L7.2 12.7 H12.5Z" fill="#fff" stroke="#000" stroke-width="1"/></svg>
</body></html>
